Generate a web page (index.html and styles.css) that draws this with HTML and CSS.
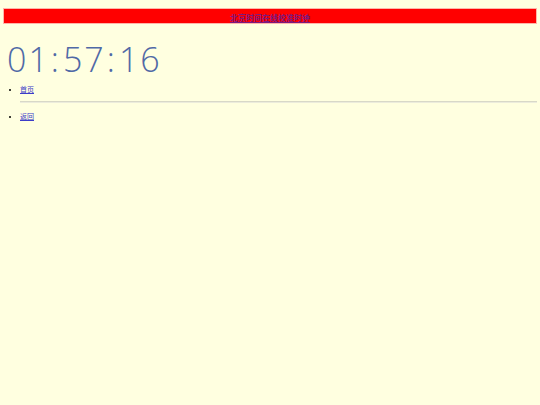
FILE: index.html
```html
<!DOCTYPE html>
<html lang="zh">
<head>
<meta charset="utf-8">
<title>时钟</title>
<link rel="stylesheet" href="styles.css">
</head>
<body>
<div class="banner"><a class="banner-link" href="#">北京时间在线校准时钟</a></div>
<div class="clock">01<span class="sep">:</span>57<span class="sep">:</span>16</div>
<ul class="menu">
  <li class="menu-item"><a class="menu-link" href="#">首页</a></li>
  <hr class="rule">
  <li class="menu-item"><a class="menu-link" href="#">返回</a></li>
</ul>
</body>
</html>
```
FILE: styles.css
```css
html, body {
  margin: 0;
  padding: 0;
  background: #ffffe0;
}
body {
  padding-top: 8px;
  font-family: "Liberation Sans", "Noto Sans CJK SC", sans-serif;
}
.banner {
  margin: 0 3px;
  height: 14px;
  background: #ff0000;
  border: 1px solid #ffb4a8;
  text-align: center;
  line-height: 14px;
}
.banner-link {
  color: #7a1a80;
  font-size: 8px;
  font-weight: bold;
  text-decoration: underline;
}
.clock {
  margin: 15px 0 0 7px;
  font-family: "Open Sans", sans-serif;
  font-weight: 300;
  font-size: 34px;
  line-height: 40px;
  letter-spacing: 2px;
  color: #5069a6;
}
.sep {
  padding: 0 2px 0 1px;
}
.menu {
  margin: 6px 3px 0 0;
  padding-left: 20px;
  font-size: 7px;
  line-height: 10px;
}
.menu-item {
  margin: 0;
}
.menu-link {
  color: #3c3cc8;
}
.rule {
  margin: 6px 0 9px 0;
  border: 0;
  border-top: 1px solid #d8d8c8;
  height: 1px;
  background: #ececdc;
}
```
